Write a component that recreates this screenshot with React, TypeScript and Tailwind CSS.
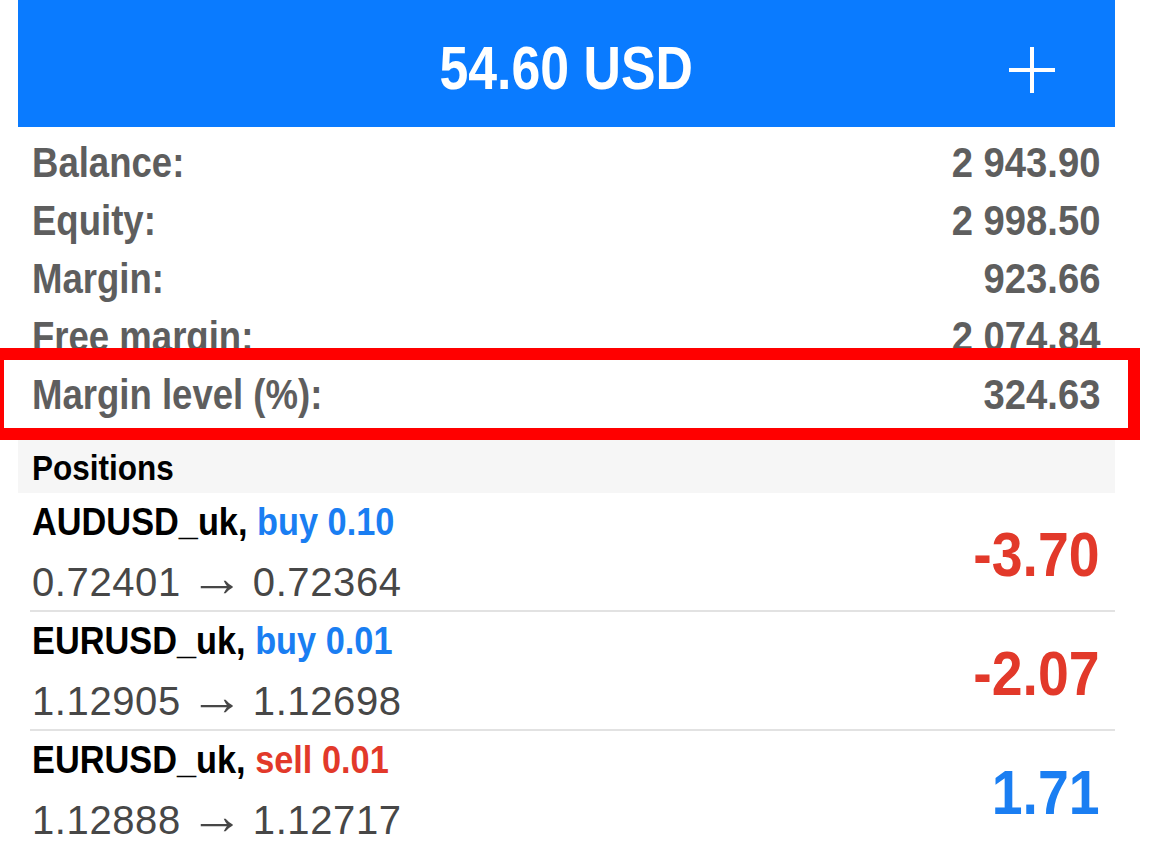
import React from "react";

const BOLD = { fontFamily: '"Liberation Sans", Arial, sans-serif' };
const REG = { fontFamily: '"Liberation Sans", Arial, sans-serif' };

const summary = [
  ["Balance:", "2 943.90"],
  ["Equity:", "2 998.50"],
  ["Margin:", "923.66"],
  ["Free margin:", "2 074.84"],
  ["Margin level (%):", "324.63"],
];

const positions = [
  { sym: "AUDUSD_uk,", side: "buy 0.10", buy: true, a: "0.72401", b: "0.72364", pl: "-3.70", pos: false },
  { sym: "EURUSD_uk,", side: "buy 0.01", buy: true, a: "1.12905", b: "1.12698", pl: "-2.07", pos: false },
  { sym: "EURUSD_uk,", side: "sell 0.01", buy: false, a: "1.12888", b: "1.12717", pl: "1.71", pos: true },
];

export default function App() {
  return (
    <div className="relative w-[1156px] h-[844px] overflow-hidden bg-white">
      <div className="ml-[18px] w-[1097px]">
        <div className="relative h-[127px] bg-[#0a7bff] flex items-center justify-center">
          <span className="inline-block scale-x-[0.85] text-white font-bold text-[61px] leading-none pt-[10px]" style={BOLD}>54.60 USD</span>
          <svg className="absolute left-[991px] top-[47px]" width="46" height="46" viewBox="0 0 46 46">
            <rect x="21" y="0" width="4" height="46" fill="white" />
            <rect x="0" y="21" width="46" height="4" fill="white" />
          </svg>
        </div>
        <div className="pt-[7px] pb-[16px] pl-[14px] pr-[15px]">
          {summary.map(([k, v]) => (
            <div key={k} className="flex justify-between h-[58px] leading-[58px] text-[42px] font-bold text-[#5e5e5e]" style={BOLD}>
              <span className="inline-block origin-left scale-x-[0.87]">{k}</span>
              <span className="inline-block origin-right scale-x-[0.91]">{v}</span>
            </div>
          ))}
        </div>
        <div className="h-[53px] bg-[#f6f6f6] pl-[14px] flex items-center">
          <span className="inline-block origin-left scale-x-[0.9] text-[35px] font-bold text-black leading-none pt-[2px]" style={BOLD}>Positions</span>
        </div>
        {positions.map((p, i) => (
          <div key={i} className="ml-[12px] h-[119px] flex items-center justify-between border-b-2 border-[#e2e2e2] pr-[15px]">
            <div className="pl-[2px]">
              <div className="text-[39px] font-bold leading-[56px] text-black whitespace-nowrap" style={BOLD}>
                <span className="inline-block origin-left scale-x-[0.88]">
                  {p.sym} <span className={p.buy ? "text-[#1a7ef2]" : "text-[#e2392a]"}>{p.side}</span>
                </span>
              </div>
              <div className="text-[40px] leading-[56px] text-[#474747] tracking-[0.6px] whitespace-nowrap" style={REG}>
                {p.a}
                <span className="text-[54px] tracking-normal mx-[9px] leading-none">{"\u2192"}</span>
                {p.b}
              </div>
            </div>
            <div className={`inline-block origin-right scale-x-[0.88] text-[63px] font-bold leading-none pt-[6px] ${p.pos ? "text-[#1a7ef2]" : "text-[#e2392a]"}`} style={BOLD}>{p.pl}</div>
          </div>
        ))}
      </div>
      <div className="absolute left-[-8px] top-[348px] w-[1148px] h-[92px] border-[12px] border-[#ff0000]" />
    </div>
  );
}
